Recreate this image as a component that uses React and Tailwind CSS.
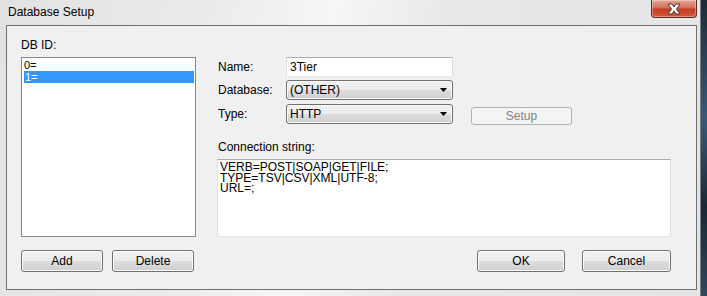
import React from "react";

const btn =
  "h-[22px] rounded-[3px] border border-[#707070] bg-[linear-gradient(#f2f2f2_0%,#ebebeb_48%,#dddddd_52%,#cfcfcf_100%)] text-[12px] leading-[20px] text-black text-center shadow-[inset_0_0_0_1px_#fcfcfc]";

const Combo = ({ value }) => (
  <div className="relative h-[20px] w-[167px] rounded-[3px] border border-[#707070] bg-[linear-gradient(#f2f2f2_0%,#ebebeb_48%,#dddddd_52%,#cfcfcf_100%)] shadow-[inset_0_0_0_1px_#fbfbfb] flex items-center pl-[3px]">
    <span className="text-[12px] leading-[14px]">{value}</span>
    <svg className="ml-auto mr-[5px]" width="7" height="4" viewBox="0 0 7 4">
      <path d="M0 0H7L3.5 4Z" fill="#000" />
    </svg>
  </div>
);

export default function App() {
  return (
    <div className="w-[707px] h-[296px] flex overflow-hidden bg-[#2b3541] font-['Liberation_Sans',Arial,sans-serif] text-black">
      {/* window */}
      <div className="w-[701px] h-full flex flex-col bg-[linear-gradient(100deg,#e2e2e2_0%,#ececec_30%,#f6f6f6_45%,#e8e8e8_60%,#e4e4e4_100%)] border-r border-[#7c7c7c]">
        {/* title bar */}
        <div className="h-[25px] flex items-start">
          <span className="pl-[8px] pt-[5px] text-[12px] leading-[14px]">Database Setup</span>
          <div className="ml-auto mr-[3px] w-[46px] h-[18px] rounded-b-[4px] border border-t-0 border-[#5e2a22] bg-[linear-gradient(#e8a594_0%,#d5705a_45%,#c43c24_55%,#d8573a_100%)] shadow-[inset_0_0_0_1px_rgba(255,255,255,0.35)] flex items-center justify-center">
            <svg width="16" height="12" viewBox="0 0 16 12">
              <path
                d="M2 1H6L8 4L10 1H14L10.5 6L14 11H10L8 8L6 11H2L5.5 6Z"
                fill="#fff"
                stroke="#3a3a3a"
                strokeWidth="1"
              />
            </svg>
          </div>
        </div>

        {/* client */}
        <div className="flex-1 flex pl-[6px] pr-[4px] pb-[6px]">
          <div className="flex-1 border border-[#6f6f6f] bg-[#f0f0f0] flex flex-col pl-[14px] pt-[12px] pr-[25px]">
            <div className="flex">
              {/* left: db list */}
              <div className="w-[175px] flex flex-col">
                <div className="text-[12px] leading-[14px] mb-[5px]">DB ID:</div>
                <div className="h-[180px] border border-[#828790] bg-white pt-[1px] pl-[1px] pr-[1px]">
                  <div className="h-[12px] pl-[1px] text-[11px] leading-[12px]">0=</div>
                  <div className="h-[12px] pl-[1px] ml-[1px] text-[11px] leading-[12px] bg-[#3399ff] text-white">1=</div>
                </div>
              </div>

              {/* right: fields */}
              <div className="ml-[22px] flex-1 flex flex-col">
                <div className="mt-[19px] flex items-center h-[20px]">
                  <span className="w-[68px] text-[12px]">Name:</span>
                  <div className="h-[20px] w-[167px] border border-[#abadb3] border-b-[#e3e9ef] border-x-[#dbdfe6] bg-white pl-[3px] text-[12px] leading-[18px]">
                    3Tier
                  </div>
                </div>
                <div className="mt-[3px] flex items-center h-[20px]">
                  <span className="w-[68px] text-[12px]">Database:</span>
                  <Combo value="(OTHER)" />
                </div>
                <div className="mt-[4px] flex items-center h-[20px]">
                  <span className="w-[68px] text-[12px]">Type:</span>
                  <Combo value="HTTP" />
                  <div className="ml-[18px] mt-[3px] w-[101px] h-[18px] rounded-[3px] border border-[#adb2b5] bg-[#f4f4f4] text-[12px] leading-[16px] text-center text-[#838383]">
                    Setup
                  </div>
                </div>
                <div className="mt-[16px] text-[12px] leading-[14px]">Connection string:</div>
                <div className="mt-[5px] ml-[-1px] h-[78px] w-[454px] border border-[#abadb3] border-b-[#e3e9ef] border-x-[#dbdfe6] bg-white pl-[2px] pt-[2px] text-[12px] leading-[10.5px] whitespace-pre">
                  {"VERB=POST|SOAP|GET|FILE;\nTYPE=TSV|CSV|XML|UTF-8;\nURL=;"}
                </div>
              </div>
            </div>

            {/* buttons */}
            <div className="mt-[13px] flex">
              <div className={`${btn} w-[82px]`}>Add</div>
              <div className={`${btn} w-[82px] ml-[9px]`}>Delete</div>
              <div className={`${btn} w-[88px] ml-auto border-[#3c7fb1] shadow-[inset_0_0_0_1px_#bfe6f8]`}>OK</div>
              <div className={`${btn} w-[89px] ml-[17px]`}>Cancel</div>
            </div>
          </div>
        </div>
      </div>

      {/* desktop strip */}
      <div className="flex-1 bg-[linear-gradient(#1e2a36,#3b5a78_40%,#1c2733_70%,#31475c)]" />
    </div>
  );
}
